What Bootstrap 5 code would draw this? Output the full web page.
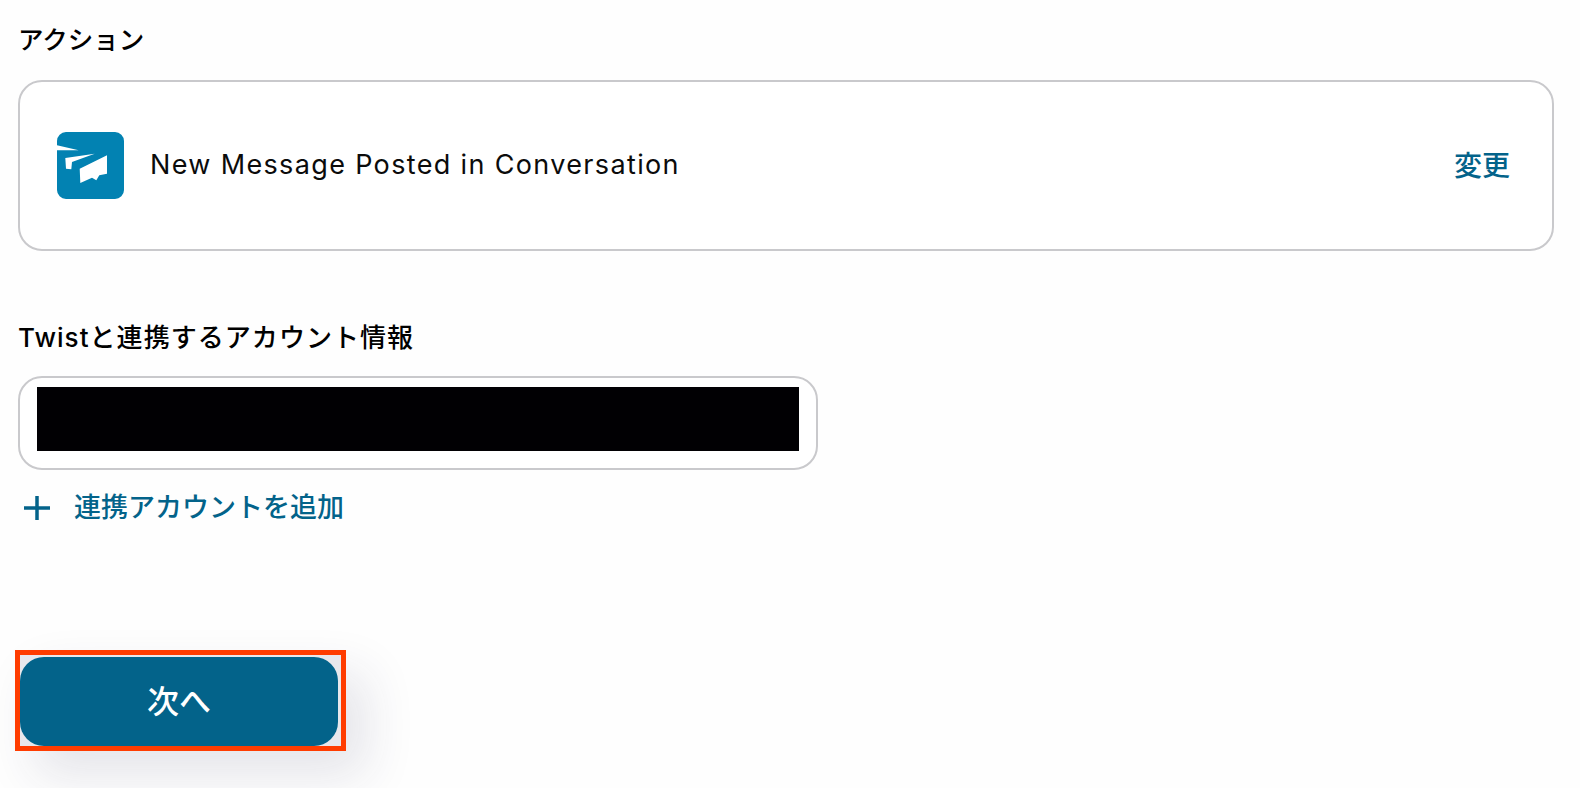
<!DOCTYPE html>
<html lang="ja">
<head>
  <meta charset="UTF-8">
  <title>アクション</title>
  <meta name="viewport" content="width=device-width, initial-scale=1">
  <link href="https://cdn.jsdelivr.net/npm/bootstrap@5.3.0/dist/css/bootstrap.min.css" rel="stylesheet">
  <style>
    html, body { height: 788px; overflow: hidden; }
    body { background: #fefefe; color: #000; font-family: Inter, "Noto Sans CJK JP", sans-serif; padding: 24px 26px 0 18px; }
    .field-title { font-size: 25.5px; line-height: 32px; font-weight: 500; letter-spacing: 0; margin: 0; }
    .action-box { height: 171px; margin-top: 24px; padding: 0 42px 0 37px; background: #fff; border: 2px solid #c9c9cc; border-radius: 24px; }
    .action-name { font-size: 27px; letter-spacing: 1.35px; color: #0b0b0b; margin-left: 26px; }
    .change-link { font-size: 28px; color: #03638a; text-decoration: none; font-weight: 500; }
    .account-title { margin-top: 71px; font-size: 26px; letter-spacing: 1.05px; }
    .account-box { width: 800px; height: 94px; margin-top: 22px; padding: 9px 17px; background: #fff; border: 2px solid #c9c9cc; border-radius: 24px; }
    .masked { height: 64px; background: #010003; }
    .add-link { margin-top: 20px; padding-left: 6px; font-size: 27px; line-height: 36px; color: #03638a; text-decoration: none; font-weight: 500; }
    .next-frame { width: 331px; height: 101px; margin: 123px 0 0 -3px; padding: 2px 4px 0 0; border: 5px solid #ff3c00; background: #e8e8ec; box-shadow: 20px 24px 50px rgba(40, 40, 80, .12); }
    .next-btn { width: 318px; height: 89px; background: #03638a; color: #fff; font-size: 32px; font-weight: 500; border: 0; border-radius: 24px; }
    .next-btn:hover { background: #03638a; color: #fff; }
  </style>
</head>
<body>

  <h2 class="field-title">アクション</h2>
  <div class="action-box d-flex align-items-center">
    <svg width="67" height="67" viewBox="0 0 67 67" aria-hidden="true">
      <path d="M9 0H58a9 9 0 0 1 9 9V58a9 9 0 0 1-9 9H9a9 9 0 0 1-9-9V18.3H21.7L0 13.3V9a9 9 0 0 1 9-9Z" fill="#0282b2"/>
      <path d="M8.3 26 37.7 21.7 15 30 14.3 37.3 9 36.7Z" fill="#fff"/>
      <path d="M22.7 36.7 50 23.3V41.7L42.3 43.3 39.3 48.3 35 45.7 23.3 51Z" fill="#fff"/>
    </svg>
    <span class="action-name">New Message Posted in Conversation</span>
    <a class="change-link ms-auto" href="#">変更</a>
  </div>

  <h2 class="field-title account-title">Twistと連携するアカウント情報</h2>
  <div class="account-box">
    <div class="masked"></div>
  </div>
  <a class="add-link d-inline-flex align-items-center gap-4" href="#">
    <svg width="26" height="26" viewBox="0 0 26 26" aria-hidden="true">
      <path d="M13 1V25M0 13H26" stroke="#03638a" stroke-width="3.5" fill="none"/>
    </svg>
    <span>連携アカウントを追加</span>
  </a>

  <div class="next-frame">
    <button type="button" class="btn next-btn d-block">次へ</button>
  </div>

</body>
</html>
